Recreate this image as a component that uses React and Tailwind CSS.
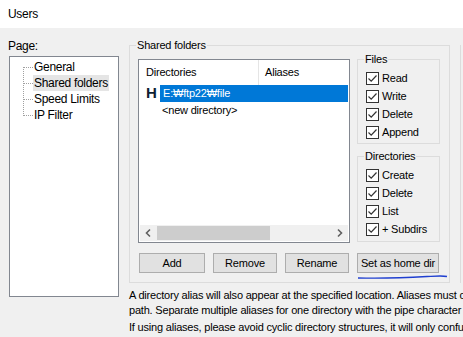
import React from 'react';

const Check = ({ label }) => (
  <div className="flex items-center h-[18px]">
    <span className="w-[13px] h-[13px] shrink-0 border border-[#333333] bg-white flex items-center justify-center">
      <svg width="11" height="11" viewBox="0 0 11 11">
        <path d="M1.5 5.5 L4.2 8.2 L9.5 2.5" fill="none" stroke="#333333" strokeWidth="1.2" />
      </svg>
    </span>
    <span className="ml-[3px] text-black whitespace-nowrap">{label}</span>
  </div>
);

const Group = ({ title, className, children }) => (
  <div className={`relative border border-[#dcdcdc] ${className}`}>
    <span className="absolute -top-[9px] left-[6px] px-[1px] bg-[#f0f0f0] leading-[16px] whitespace-nowrap">{title}</span>
    {children}
  </div>
);

const Btn = ({ label, className }) => (
  <div className={`h-[20px] shrink-0 border border-[#adadad] bg-[#e1e1e1] flex items-center justify-center whitespace-nowrap ${className}`}>
    {label}
  </div>
);

const treeItems = ['General', 'Shared folders', 'Speed Limits', 'IP Filter'];

const App = () => {
  return (
    <div
      className="w-[463px] h-[337px] overflow-hidden bg-[#f0f0f0] text-[11px] tracking-[-0.2px] text-black"
      style={{ fontFamily: '"Liberation Sans", Arial, sans-serif' }}
    >
      {/* title bar */}
      <div className="h-[28px] bg-white flex items-center pl-[8px] text-[12px] tracking-[-0.3px]">Users</div>

      <div className="flex pl-[9px] pt-[10px]">
        {/* left: page tree */}
        <div className="w-[110px] shrink-0">
          <div className="h-[18px] leading-[16px] -ml-[1px] text-[12px] tracking-[-0.3px]">Page:</div>
          <div className="h-[241px] bg-white border border-[#828790] pt-[2px] pl-[13px]">
            <div className="relative">
              <div className="absolute left-0 top-[8px] h-[49px] border-l border-dotted border-[#a0a0a0]" />
              {treeItems.map((t) => (
                <div key={t} className="flex items-center h-[16px]">
                  <span className="w-[10px] shrink-0 border-t border-dotted border-[#a0a0a0]" />
                  <span className={`px-[1px] leading-[16px] whitespace-nowrap text-[12px] tracking-[-0.3px] ${t === 'Shared folders' ? 'bg-[#e5e5e5]' : ''}`}>{t}</span>
                </div>
              ))}
            </div>
          </div>
        </div>

        {/* right */}
        <div className="ml-[10px] flex-1 min-w-0">
          <div className="flex">
            <Group title="Shared folders" className="w-[321px] h-[238px] shrink-0 mt-[7px] pl-[8px] pt-[13px]">
              <div className="flex">
                {/* directory list */}
                <div className="w-[212px] h-[184px] shrink-0 bg-white border border-[#828790] flex flex-col">
                  <div className="flex h-[25px] items-center">
                    <div className="w-[120px] h-full pl-[7px] flex items-center border-r border-[#e5e5e5]">Directories</div>
                    <div className="pl-[6px]">Aliases</div>
                  </div>
                  <div className="flex items-center h-[17px] pl-[7px]">
                    <span className="w-[14px] font-bold text-[15px] text-[#0f1f33]">H</span>
                    <span className="flex-1 h-full bg-[#0078d7] text-white pl-[3px] mr-[1px] flex items-center">E:₩ftp22₩file</span>
                  </div>
                  <div className="h-[17px] pl-[23px] flex items-center">&lt;new directory&gt;</div>
                  <div className="flex-1" />
                  <div className="h-[16px] mb-[1px] mx-[1px] bg-[#f0f0f0] flex items-center">
                    <svg width="17" height="16" viewBox="0 0 17 16" className="shrink-0">
                      <path d="M10 4.5 L6.5 8 L10 11.5" fill="none" stroke="#606060" strokeWidth="1.6" />
                    </svg>
                    <div className="w-[113px] h-[14px] bg-[#cdcdcd]" />
                    <div className="flex-1" />
                    <svg width="17" height="16" viewBox="0 0 17 16" className="shrink-0">
                      <path d="M7 4.5 L10.5 8 L7 11.5" fill="none" stroke="#606060" strokeWidth="1.6" />
                    </svg>
                  </div>
                </div>

                {/* permission groups */}
                <div className="ml-[7px] w-[83px] shrink-0">
                  <Group title="Files" className="h-[85px] pt-[9px] pl-[8px]">
                    {['Read', 'Write', 'Delete', 'Append'].map((l) => <Check key={l} label={l} />)}
                  </Group>
                  <Group title="Directories" className="h-[86px] mt-[12px] pt-[9px] pl-[8px]">
                    {['Create', 'Delete', 'List', '+ Subdirs'].map((l) => <Check key={l} label={l} />)}
                  </Group>
                </div>
              </div>

              {/* buttons */}
              <div className="flex mt-[10px] relative">
                <Btn label="Add" className="w-[66px] ml-[1px]" />
                <Btn label="Remove" className="w-[64px] ml-[8px]" />
                <Btn label="Rename" className="w-[64px] ml-[8px]" />
                <Btn label="Set as home dir" className="w-[82px] ml-[8px]" />
                <svg className="absolute left-[219px] top-[21px]" width="92" height="6" viewBox="0 0 92 6">
                  <path d="M1 4 C 20 4.5, 45 4, 70 2.5 C 80 2, 86 1.5, 90 2.5" fill="none" stroke="#1f3fd0" strokeWidth="1.3" />
                </svg>
              </div>
            </Group>
            <div className="ml-[10px] mt-[7px] h-[238px] border-l border-[#dcdcdc] w-[4px] shrink-0" />
          </div>

          <div className="mt-[5px] leading-[15px] whitespace-nowrap">
            <div>A directory alias will also appear at the specified location. Aliases must contain the full virtual</div>
            <div>path. Separate multiple aliases for one directory with the pipe character (|)</div>
            <div className="mt-[2px]">If using aliases, please avoid cyclic directory structures, it will only confuse FTP clients.</div>
          </div>
        </div>
      </div>
    </div>
  );
};

export default App;
